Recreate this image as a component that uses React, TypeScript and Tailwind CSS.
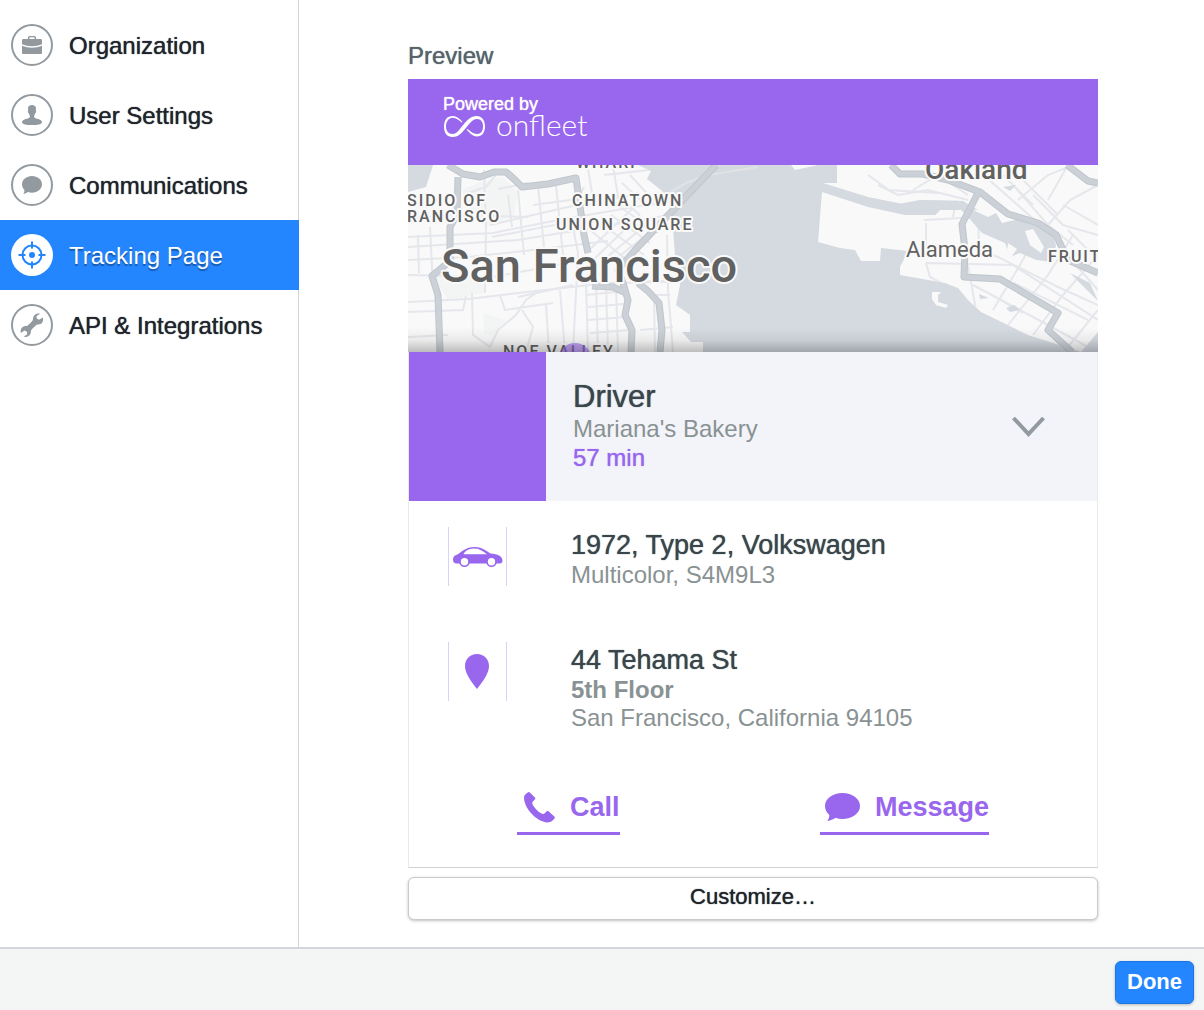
import type { ReactNode } from 'react';

interface NavItem {
  label: string;
  icon: ReactNode;
  active?: boolean;
}

interface DetailRowProps {
  icon: ReactNode;
  title: string;
  children: ReactNode;
}

const navItems: NavItem[] = [
  { label: 'Organization', icon: <BriefcaseIcon /> },
  { label: 'User Settings', icon: <UserIcon /> },
  { label: 'Communications', icon: <BubbleIcon className="w-5 h-[18px]" /> },
  { label: 'Tracking Page', icon: <TargetIcon />, active: true },
  { label: 'API & Integrations', icon: <WrenchIcon /> },
];

function BriefcaseIcon() {
  return (
    <svg width="20" height="18" viewBox="0 0 20 18" fill="currentColor" aria-hidden="true">
      <path
        fillRule="evenodd"
        d="M6 3V1.6Q6 0 7.6 0h4.8Q14 0 14 1.6V3h4.6Q20 3 20 4.400V8.200Q15.500 10.300 10 10.300T0 8.200V4.400Q0 3 1.400 3ZM7.500 3h5V1.900Q12.500 1.300 11.900 1.300H8.100Q7.500 1.300 7.500 1.900Z"
      />
      <path d="M0 9.700Q4.500 11.800 10 11.800T20 9.700V17q0 1-1 1H1q-1 0-1-1Z" />
    </svg>
  );
}

function UserIcon() {
  return (
    <svg width="20" height="20" viewBox="0 0 20 20" fill="currentColor" aria-hidden="true">
      <path d="M10 0c2.600 0 4 1.300 4 3.600l-.2 2c.6.500.4 2-.4 2.400-.3 1.200-.9 2-1.200 2.400v1.500c.4 1.200 2 1.600 4.200 2.200C19 14.900 20 16 20 17.400 20 19 15.500 20 10 20S0 19 0 17.400C0 16 1 14.900 3.600 14.100c2.200-.6 3.800-1 4.200-2.200v-1.500c-.3-.4-.9-1.200-1.200-2.400-.8-.4-1-1.900-.4-2.400L6 3.600C6 1.300 7.400 0 10 0Z" />
    </svg>
  );
}

function BubbleIcon({ className }: { className: string }) {
  return (
    <svg className={className} viewBox="0 0 34 28" preserveAspectRatio="none" fill="currentColor" aria-hidden="true">
      <path d="M17 0C26.400 0 34 5.600 34 13s-7.600 13-17 13c-2.400 0-4.700-.4-6.700-1.200C8.500 26 6 27.200 3 28c-.5.100-.6-.4-.2-.9 1-1.400 1.500-3.500 1.300-5.300C1.500 19.500 0 16.500 0 13 0 5.600 7.600 0 17 0Z" />
    </svg>
  );
}

function TargetIcon() {
  return (
    <svg width="28" height="28" viewBox="0 0 28 28" fill="none" stroke="currentColor" strokeWidth="2" aria-hidden="true">
      <circle cx="14" cy="14" r="9.500" />
      <path d="M14 .5v7M14 20.500v7M.5 14h7M20.500 14h7" />
      <circle cx="14" cy="14" r="3" fill="currentColor" stroke="none" />
    </svg>
  );
}

function WrenchIcon() {
  return (
    <svg width="24" height="24" viewBox="0 0 24 24" fill="currentColor" aria-hidden="true">
      <path d="M22.800 4.400l-3.600 2.300-2.500-1.200-.1-2.600L20.200.8C17.300-.1 14 1.300 13.200 4.300c-.3 1.100-.1 2-.5 2.900-.3.800-4.600 5.200-5.500 5.500-.9.400-1.800.2-2.900.5C1.300 14 0 17.100.9 20l3.500-2.400 2.600 1.200.1 2.700-3.500 2.100c2.900 1 6.300-.4 7.100-3.400.3-1.100 0-2 .4-2.900.3-.8 4.800-5.200 5.600-5.600.9-.3 1.800-.1 2.900-.4 3-.8 4.200-4.100 3.200-6.900Z" />
    </svg>
  );
}

function CarIcon() {
  return (
    <svg width="50" height="20" viewBox="0 0 50 20" aria-hidden="true">
      <path
        fill="#9966ee"
        fillRule="evenodd"
        d="M0 12C0 9.500 2 8.200 5 7.200 10 3.500 14 0 22 0c6.500 0 10 3 15.500 6.500 7 .5 12 2.700 12 7 0 2.300-1 2.900-3 2.900H3C.8 16.400 0 14.500 0 12ZM10.500 7.300h23.500C29 3.500 26 1.500 21 1.500c-5.500 0-9.500 2.800-10.500 5.800Z"
      />
      <circle cx="11.500" cy="14.700" r="4.500" fill="#fff" stroke="#9966ee" strokeWidth="1.600" />
      <circle cx="38.500" cy="14.700" r="4.500" fill="#fff" stroke="#9966ee" strokeWidth="1.600" />
    </svg>
  );
}

function PinIcon() {
  return (
    <svg width="26" height="35" viewBox="0 0 26 35" fill="#9966ee" aria-hidden="true">
      <path d="M12 0c7 0 12 5 12 12 0 8-7 16.500-12 23C7 28.500 0 20 0 12 0 5 5 0 12 0Z" />
    </svg>
  );
}

function PhoneIcon() {
  return (
    <svg width="31" height="31" viewBox="0 0 31 31" fill="currentColor" aria-hidden="true">
      <path d="M4.200.3q.9-.6 1.700.2l5 5q1 1-.1 2.100L8.900 9.500q-1.200 1.200-.2 3.200c1.900 3.600 5.300 6.800 8.900 8.900q1.600.9 2.800-.2l2.400-2.100q1-.9 2 .1l5.500 5.200q1 1 0 2.100l-2.200 2.400Q26.300 30.500 23.500 30.500C12 29.500 0 16 0 5.500Q0 2.500 4.200.3Z" />
    </svg>
  );
}

function InfinityLogo() {
  return (
    <svg width="41" height="21" viewBox="0 0 41 21" aria-hidden="true">
      <path
        fill="#fff"
        fillRule="evenodd"
        d="M9 0C3 0 0 4 0 10.500S3 21 8.500 21c5.500 0 8.500-3.500 13-8.500C25.500 8 28.500 3 33 3c4 0 6 3 6 7.500S37 18 33 18c-3.500 0-6.500-2.500-9.500-5l-.8.800c3.300 3.600 6.300 6.700 10.300 6.700 5 0 8-4 8-10S38 0 32.500 0C27 0 23.500 4 19.500 8.500 15.500 13 13 18 8.500 18 4.500 18 2 15 2 10.500S4.500 1.800 8.800 1.800c3 0 6 2.200 9 4.700l.6-.7C15.500 2.500 12.500 0 9 0Z"
      />
    </svg>
  );
}

const minorRoads = [
  'M0 72L85 68 150 55 262 36M0 82L110 75 190 62 262 50M0 53L50 50 120 52M0 95L60 92 125 85 200 76',
  'M0 110L85 112 160 98M0 137L60 134 110 128 200 118 265 117M0 147L55 145 58 131M0 172L40 170',
  'M76 5L78 60 77 128M110 25L116 90M130 20L136 82M148 20L155 90M165 62L170 88 165 187M22 62L25 122M10 70L11 108',
  'M125 40L170 34 176 22M90 24L120 18M100 30L104 62M60 28L78 22 92 5M82 60L160 42 225 30M84 72L162 57',
  'M138 140L141 187M152 125L157 187M178 118L180 187M188 118L190 187M198 118L200 187M208 120L210 187M178 130L216 126M180 142L216 139M180 155L218 152M182 168L222 165',
  'M64 128L65 170 82 182M82 182L90 165 108 150 118 135 128 128M114 145L125 162 118 187M92 130L97 145 145 138M110 132L165 120',
  'M185 95L232 50M192 98L240 58M200 100L246 64M180 86L225 43M182 65L225 100M192 58L236 90M203 50L242 78M212 42L250 68',
  'M222 10L246 36M214 18L240 42M208 30L232 50M196 10L250 4M180 4L186 40M205 0L210 32',
  'M232 117L265 115M259 70L260 125 265 187M240 130L262 130M232 165L265 162M246 130L247 187',
  'M516 55L570 52 571 82M518 58L518 84 560 82M545 52L548 35M518 98L522 112 537 120M518 98L605 100 690 155M565 82L590 92 650 122 690 140',
  'M565 120L640 160 680 182M575 125L615 148M585 145L612 100 620 85M600 160L640 110 665 70M625 170L655 130 690 90M560 100L568 145M606 118L680 155M660 182L690 145',
  'M610 35L640 10 665 0M640 60L662 35 690 20M655 40L690 60M605 20L640 60 665 80M590 5L625 40M625 30L655 60 690 70M570 5L630 58M600 0L650 50M660 0L640 35',
  'M470 20L490 30 520 25 560 35M505 25L530 10 560 30M460 10L485 28M480 25L530 28M660 65L690 95M650 80L690 125',
];

const highways = [
  'M40 0L55 9 72 12 86 7 98 7 106 14 114 22 140 19 168 13 176 70 180 88',
  'M50 12L49 50 42 62 42 96 24 111 30 130 32 187',
  'M308 0L228 84 210 105 215 118 220 135 217 150 224 165 223 187',
  'M184 121L205 122 216 127M230 118L240 126 251 138 254 165 252 187',
  'M483 0L492 9 515 9 540 15 572 27 600 49 630 58 648 70 660 95 690 108',
  'M572 24L554 59 557 85 556 112 592 114 650 148 640 165 664 187',
  'M659 0L680 16 690 18',
];

function PreviewMap() {
  return (
    <svg className="block w-full h-[187px]" viewBox="0 0 690 187" preserveAspectRatio="xMidYMid slice" role="img" aria-label="Map of San Francisco">
      <defs>
        <linearGradient id="mapFade" x1="0" y1="0" x2="0" y2="1">
          <stop offset="0" stopColor="#000" stopOpacity="0" />
          <stop offset="0.5" stopColor="#000" stopOpacity="0.06" />
          <stop offset="1" stopColor="#000" stopOpacity="0.24" />
        </linearGradient>
        <clipPath id="land">
          <path d="M0 187V27L18 22 25 0H230L243 6 239 14 253 25 260 33 265 62 267 92 272 120 268 140 282 150 282 167 274 167 283 177 295 177V187ZM383 0L387 5 410 0ZM429 0V18H415L460 32 500 40 512 35 555 36 570 45H690V0ZM414 27L460 42 497 50H527L532 45H690V167L673 187 620 170 573 147 560 135 550 123 537 118 492 110V102L500 86 473 83 472 96H453L447 85 432 83 410 77Z" />
        </clipPath>
      </defs>
      <rect width="690" height="187" fill="#d5dae1" />
      <g clipPath="url(#land)">
        <rect width="690" height="187" fill="#f9f9f9" />
        <path fill="#f3f4f4" d="M54 25L70 18 95 12 110 28 106 50 78 62 60 45ZM75 148L98 155 85 170 76 168ZM25 112L80 110 76 128 40 135Z" />
        <g fill="none" stroke="#e5e7ec" strokeWidth="2">
          {minorRoads.map((d) => (
            <path key={d} d={d} />
          ))}
        </g>
      </g>
      <path fill="#d5dae1" d="M480 41L512 35 555 36 567 46 580 52 588 48 594 58 620 52 632 56 642 63 648 80 645 97 628 95 612 88 602 92 597 78 574 68 560 52 553 45 532 45 527 50 497 50ZM571 129L581 133 572 134ZM598 143L606 140 613 145 602 147ZM662 108L682 118 690 136 676 122ZM595 22L608 20 602 26Z" />
      <path fill="#f9f9f9" d="M617 66L625 64 636 82 633 88 622 80ZM600 78L609 84 604 91 598 94ZM524 127L533 127 530 130 530 137 540 140 538 143 528 140 524 134Z" />
      <path d="M260 36L264 26 280 17 300 10 350 2" fill="none" stroke="#e1e2e3" strokeWidth="2" />
      <g fill="none" strokeLinejoin="round">
        {highways.map((d) => (
          <path key={d} d={d} stroke="#bfc6cc" strokeWidth="7" />
        ))}
        {highways.map((d) => (
          <path key={d} d={d} stroke="#cbd1d7" strokeWidth="5" />
        ))}
      </g>
      <g
        fill="#616161"
        stroke="#f9f9f9"
        strokeWidth="4"
        strokeLinejoin="round"
        paintOrder="stroke"
        className="font-['Roboto',sans-serif] font-medium"
      >
        <text x="-1" y="41" fontSize="16" letterSpacing="2">SIDIO OF</text>
        <text x="-1" y="57" fontSize="16" letterSpacing="2">RANCISCO</text>
        <text x="168" y="3" fontSize="16" letterSpacing="2">WHARF</text>
        <text x="164" y="41" fontSize="16" letterSpacing="2">CHINATOWN</text>
        <text x="148" y="65" fontSize="16" letterSpacing="2">UNION SQUARE</text>
        <text x="95" y="192" fontSize="16" letterSpacing="2">NOE VALLEY</text>
        <text x="640" y="97" fontSize="16" letterSpacing="2">FRUITVALE</text>
        <text x="33" y="117" fontSize="47">San Francisco</text>
        <text x="517" y="14" fontSize="28">Oakland</text>
        <text x="498" y="92" fontSize="22" className="font-normal">Alameda</text>
      </g>
      <circle cx="167" cy="195" r="17" fill="#9966ee" fillOpacity="0.6" />
      <rect y="163" width="690" height="24" fill="url(#mapFade)" />
    </svg>
  );
}

function Sidebar() {
  return (
    <nav className="w-[299px] shrink-0 border-r border-[#d3d6d9] pt-[10px]">
      {navItems.map(({ label, icon, active }) => (
        <a
          key={label}
          href="#"
          aria-current={active ? 'page' : undefined}
          className={`flex h-[70px] items-center gap-4 pl-[11px] text-2xl ${
            active
              ? '-mr-px bg-[#2486ff] text-white [text-shadow:0_2px_1px_rgba(0,0,0,0.35)]'
              : 'text-[#20242c] [text-shadow:0_0_1px_currentColor]'
          }`}
        >
          <span
            className={`flex size-[42px] items-center justify-center rounded-full ${
              active ? 'bg-white text-[#2486ff]' : 'border-2 border-[#929aa0] text-[#929aa0]'
            }`}
          >
            {icon}
          </span>
          <span className="pt-[2px]">{label}</span>
        </a>
      ))}
    </nav>
  );
}

function DetailRow({ icon, title, children }: DetailRowProps) {
  return (
    <div className="flex items-start gap-[64px]">
      <div className="flex size-[59px] shrink-0 items-center justify-center border-x border-[#ddd0f8]">
        {icon}
      </div>
      <div className="pt-[2px] text-2xl leading-7 text-[#899293]">
        <h3 className="text-[27px] leading-8 text-[#3a464c] [text-shadow:0_0_1px_currentColor]">{title}</h3>
        {children}
      </div>
    </div>
  );
}

function TrackingPreview() {
  return (
    <section className="border-x border-b border-x-[#e9eaeb] border-b-[#cfd1d3]">
      <header className="-mx-px h-[86px] bg-[#9966ee] pt-[15px] pl-[35px] text-white">
        <p className="text-[18px] leading-5 [text-shadow:0_0_1px_currentColor]">Powered by</p>
        <div className="flex h-6 items-center gap-[11px] pl-px">
          <InfinityLogo />
          <span className="pb-1 font-['Lato',sans-serif] text-[30px] leading-6 font-light">onfleet</span>
        </div>
      </header>
      <div className="-mx-px">
        <PreviewMap />
      </div>
      <div className="flex h-[149px] items-center bg-[#f3f4f9]">
        <div className="h-full w-[137px] shrink-0 bg-[#9966ee]" />
        <div className="flex-1 pb-[2px] pl-[27px] text-2xl leading-[29px]">
          <h2 className="text-[31px] leading-[34px] text-[#3a464c] [text-shadow:0_0_1px_currentColor]">Driver</h2>
          <p className="text-[#899293]">Mariana's Bakery</p>
          <p className="text-[#9966ee] [text-shadow:0_0_1px_currentColor]">57 min</p>
        </div>
        <button type="button" aria-label="Hide details" className="mr-[52px]">
          <svg width="33" height="22" viewBox="0 0 33 22" fill="none" stroke="#929aa0" strokeWidth="4" aria-hidden="true">
            <path d="M1.500 2L16.500 18 31.500 2" />
          </svg>
        </button>
      </div>
      <div className="flex flex-col gap-[53px] pt-[26px] pl-[39px]">
        <DetailRow icon={<CarIcon />} title="1972, Type 2, Volkswagen">
          <p>Multicolor, S4M9L3</p>
        </DetailRow>
        <DetailRow icon={<PinIcon />} title="44 Tehama St">
          <p className="font-bold">5th Floor</p>
          <p>San Francisco, California 94105</p>
        </DetailRow>
      </div>
      <div className="flex justify-between px-[108px] pt-[50px] pb-8 text-[27px] font-bold text-[#9966ee]">
        <a href="#" className="flex h-[53px] items-center gap-[15px] border-b-3 border-[#9966ee] pl-[7px]">
          <PhoneIcon />
          Call
        </a>
        <a href="#" className="flex h-[53px] items-center gap-[15px] border-b-3 border-[#9966ee] pl-[5px]">
          <BubbleIcon className="w-[35px] h-7" />
          Message
        </a>
      </div>
    </section>
  );
}

export default function App() {
  return (
    <div className="flex min-h-screen flex-col bg-white font-['Liberation_Sans',Arial,sans-serif]">
      <div className="flex flex-1">
        <Sidebar />
        <main className="flex-1 pt-10 pr-[106px] pb-[27px] pl-[109px]">
          <h1 className="mb-[7px] text-2xl leading-8 text-[#56636b] [text-shadow:0_0_1px_currentColor]">Preview</h1>
          <TrackingPreview />
          <button
            type="button"
            className="mt-[9px] h-[43px] w-full rounded-md border border-[#c8cacc] bg-white pb-1 text-[22px] text-[#20242c] shadow-[0_1px_3px_rgba(0,0,0,0.25)] [text-shadow:0_0_1px_currentColor]"
          >
            Customize…
          </button>
        </main>
      </div>
      <footer className="flex h-[63px] items-center justify-end border-t-2 border-[#d3d6d9] bg-[#f4f6f6] pt-[6px] pr-[10px]">
        <button
          type="button"
          className="h-[43px] rounded-md border border-[#1a75e8] bg-[#2486ff] px-[11px] pb-[2px] text-[22px] font-bold text-white shadow-[0_1px_3px_rgba(0,0,0,0.25)]"
        >
          Done
        </button>
      </footer>
    </div>
  );
}
